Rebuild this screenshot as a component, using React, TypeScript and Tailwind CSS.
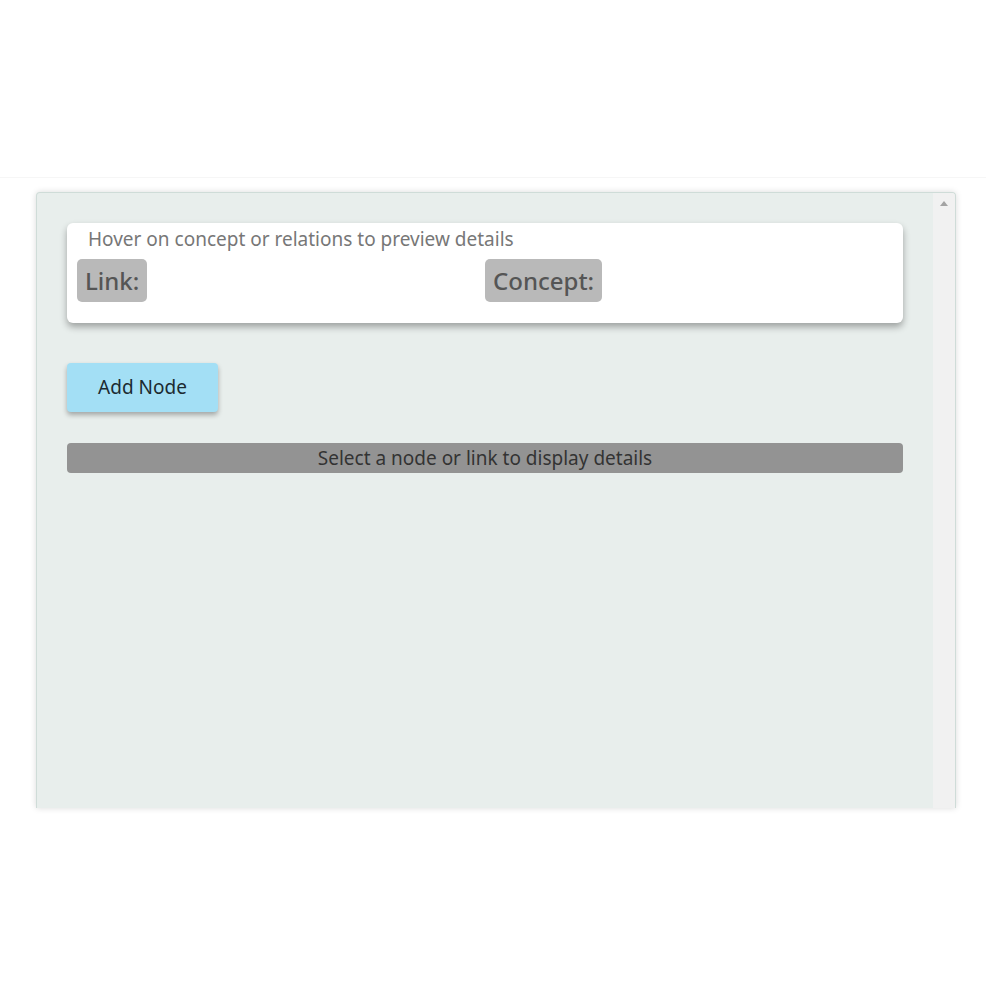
import React from 'react';

const font = { fontFamily: '"Noto Sans", "Open Sans", sans-serif' };

export default function App() {
  return (
    <div className="w-[986px] h-[986px] bg-white overflow-hidden" style={font}>
      {/* header area */}
      <div className="h-[178px] border-b border-[#f6f6f6]" />

      <div className="pl-[36px] pr-[30px] pt-[14px]">
        <div className="h-[616px] flex border border-b-0 border-[#cfdcd8] rounded-t-[4px] bg-[#e8eeec] shadow-[0_0_6px_rgba(0,0,0,0.15)] overflow-hidden">
          {/* content */}
          <div className="flex-1 px-[30px] pt-[30px]">
            <div className="bg-white rounded-[6px] shadow-[0_4px_7px_rgba(0,0,0,0.32)] h-[100px] px-[10px]">
              <div className="pl-[11px] pt-[3px] text-[19px] leading-[26px] text-[#777]">
                Hover on concept or relations to preview details
              </div>
              <div className="grid grid-cols-2 mt-[7px]">
                <div>
                  <span className="inline-block bg-[#b9b9b9] rounded-[5px] px-[8px] h-[43px] leading-[43px] text-[24px] font-medium text-[#555]">
                    Link:
                  </span>
                </div>
                <div>
                  <span className="inline-block bg-[#b9b9b9] rounded-[5px] px-[8px] h-[43px] leading-[43px] text-[24px] font-medium text-[#555]">
                    Concept:
                  </span>
                </div>
              </div>
            </div>

            <button className="mt-[40px] w-[151px] h-[49px] bg-[#a3dff5] rounded-[4px] shadow-[0_3px_5px_rgba(0,0,0,0.3)] text-[19px] text-[#1c2a30]">
              Add Node
            </button>

            <div className="mt-[31px] h-[30px] bg-[#939393] rounded-[4px] text-center text-[19px] leading-[30px] text-[#333]">
              Select a node or link to display details
            </div>
          </div>

          {/* scrollbar */}
          <div className="w-[22px] bg-[#f1f1f1] flex justify-center pt-[8px]">
            <div className="w-0 h-0 border-l-[4px] border-r-[4px] border-b-[5px] border-l-transparent border-r-transparent border-b-[#a3a3a3]" />
          </div>
        </div>
      </div>
    </div>
  );
}
